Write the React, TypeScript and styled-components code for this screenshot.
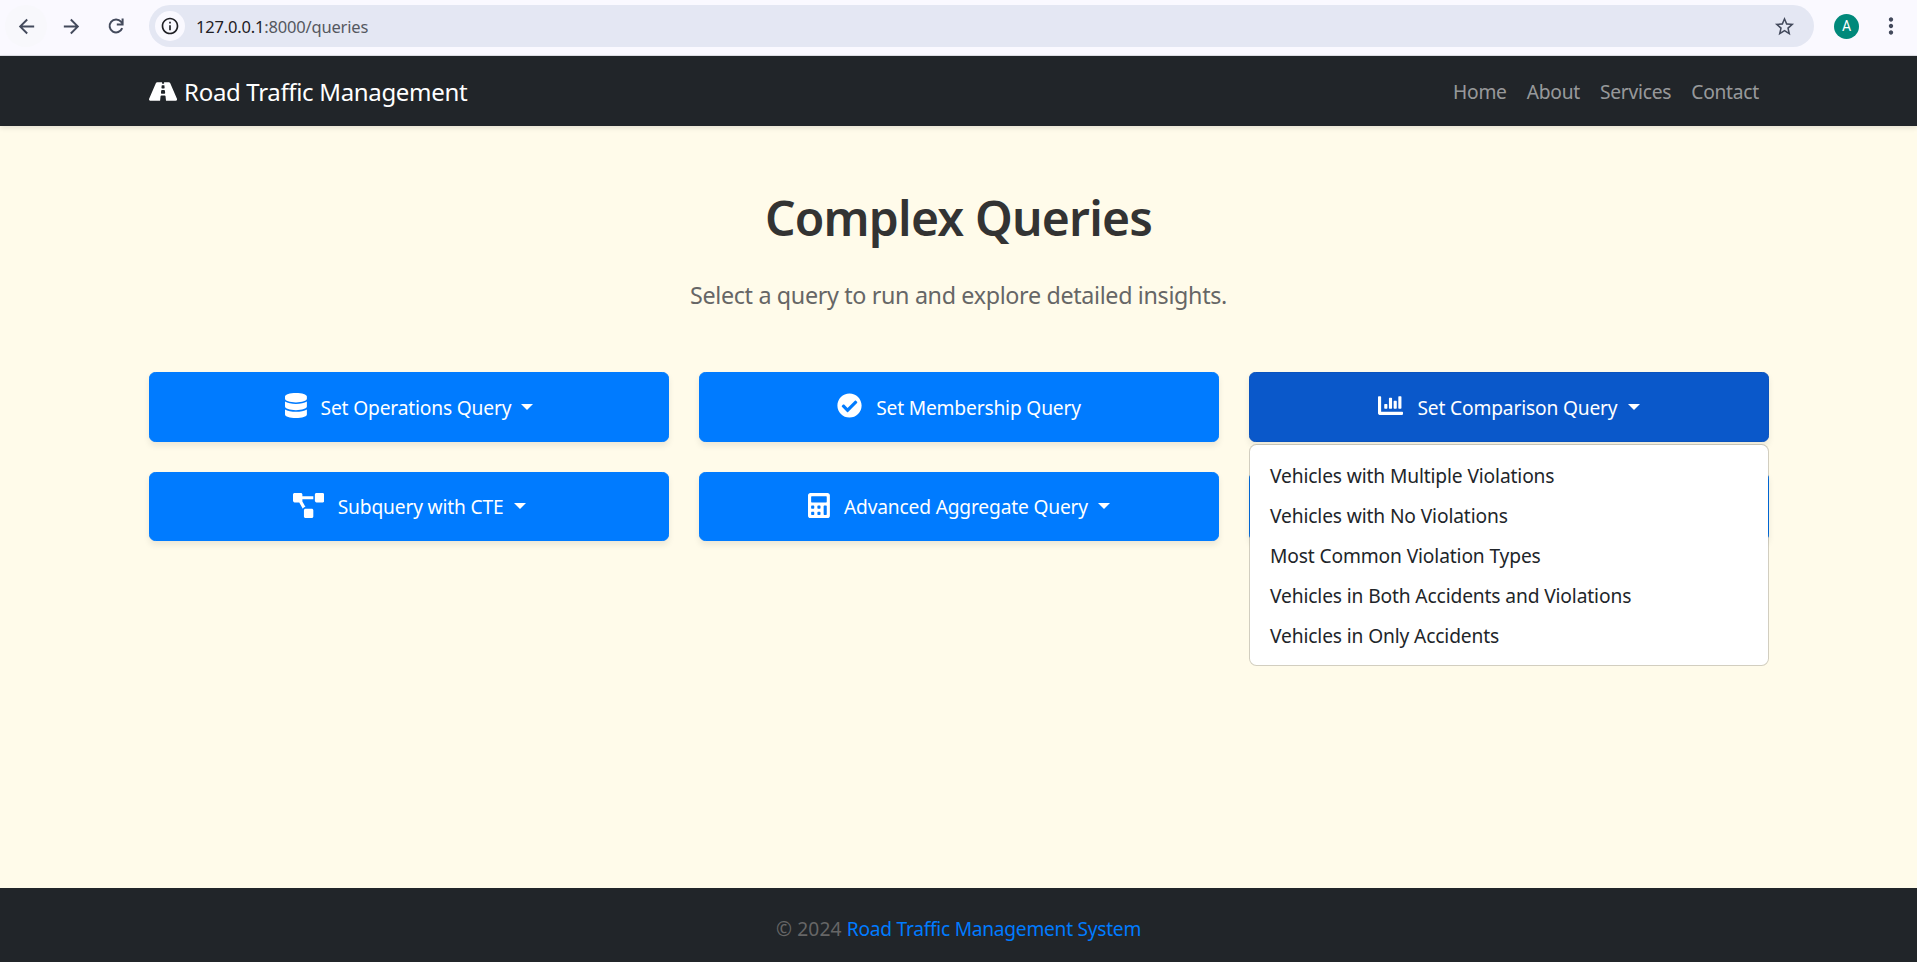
import React from "react";
import styled, { createGlobalStyle } from "styled-components";
import type { IconType } from "react-icons";
import {
  FaRoad,
  FaDatabase,
  FaCheckCircle,
  FaChartBar,
  FaProjectDiagram,
  FaCalculator,
} from "react-icons/fa";
import { MdArrowBack, MdArrowForward, MdInfoOutline, MdMoreVert, MdStarBorder } from "react-icons/md";

const GlobalStyle = createGlobalStyle`
  *, *::before, *::after { box-sizing: border-box; }
  html, body { margin: 0; padding: 0; }
  body {
    font-family: "Segoe UI", "Noto Sans", sans-serif;
    font-size: 19.2px;
    line-height: 30px;
    color: #212529;
    background: #fffbea;
    overflow: hidden;
  }
  svg { display: block; flex: none; }
`;

const Window = styled.div`
  display: flex;
  flex-direction: column;
  height: 962px;
`;

const Toolbar = styled.div`
  display: flex;
  align-items: center;
  flex: none;
  height: 56px;
  padding: 0 13px 3px 5px;
  background: #faf9ff;
  border-bottom: 1px solid #dfe0e6;
  color: #434a5c;
`;

const ToolButton = styled.button<{ $tinted?: boolean }>`
  display: flex;
  align-items: center;
  justify-content: center;
  width: 42px;
  height: 42px;
  margin-right: 3px;
  padding: 0;
  border: 0;
  border-radius: 50%;
  color: inherit;
  background: ${(p) => (p.$tinted ? "#f8f8fc" : "transparent")};
`;

const AddressBar = styled.div`
  display: flex;
  align-items: center;
  flex: 1;
  height: 42px;
  margin-left: 9px;
  padding: 0 18px 0 6px;
  border-radius: 21px;
  background: #e4e7f3;
`;

const SiteInfo = styled.span`
  display: flex;
  align-items: center;
  justify-content: center;
  width: 30px;
  height: 30px;
  border-radius: 50%;
  background: #faf9ff;
  color: #1f1f24;
`;

const Address = styled.span`
  flex: 1;
  padding: 1px 0 0 11px;
  font-size: 16.5px;
  letter-spacing: -0.18px;
  color: #55585f;

  b {
    font-weight: 400;
    color: #1f2024;
  }
`;

const Avatar = styled.span`
  display: flex;
  align-items: center;
  justify-content: center;
  width: 25px;
  height: 25px;
  margin: 0 19px 0 20px;
  border-radius: 50%;
  background: #00897b;
  color: #fff;
  font: 400 14px/25px Roboto, sans-serif;
`;

const Navbar = styled.header`
  flex: none;
  height: 70px;
  background: #212529;
  box-shadow: 0 2px 5px rgba(0, 0, 0, 0.1);
`;

const Container = styled.div`
  width: 1620px;
  margin: 0 148px 0 149px;
`;

const NavRow = styled(Container)`
  display: flex;
  align-items: center;
  justify-content: space-between;
  height: 70px;
`;

const Brand = styled.a`
  display: flex;
  align-items: center;
  gap: 7px;
  padding-top: 1px;
  font-size: 24px;
  letter-spacing: -0.33px;
  color: #fff;
`;

/* Font Awesome glyphs share one height; the width follows each view box. */
const Glyph = styled.span<{ $width: number }>`
  display: block;
  flex: none;

  svg {
    width: ${(p) => p.$width}px;
    height: 25px;
  }
`;

const NavLinks = styled.nav`
  display: flex;
  padding-top: 1px;
`;

const NavLink = styled.a`
  padding: 0 10px;
  letter-spacing: -0.24px;
  color: rgba(255, 255, 255, 0.55);
`;

const Main = styled.main`
  flex: 1;
  padding-top: 62px;
`;

const Title = styled.h1`
  margin: 0;
  font-size: 48px;
  font-weight: 600;
  line-height: 60px;
  letter-spacing: -0.79px;
  text-align: center;
  color: #333;
`;

const Subtitle = styled.p`
  margin: 28px 0 58.2px;
  font-size: 23.3px;
  line-height: 38px;
  letter-spacing: -0.34px;
  text-align: center;
  color: #666;
`;

const QueryGrid = styled(Container)`
  display: grid;
  grid-template-columns: repeat(3, 520px);
  gap: 30px;
`;

const QueryCell = styled.div`
  position: relative;
`;

const QueryButton = styled.button<{ $open?: boolean }>`
  display: flex;
  align-items: center;
  justify-content: center;
  width: 520px;
  height: 69.4px;
  padding: 0;
  border: 1px solid ${(p) => (p.$open ? "#0a53be" : "#007bff")};
  border-radius: 6.25px;
  background: ${(p) => (p.$open ? "#0a58ca" : "#007bff")};
  box-shadow: 0 4px 6px rgba(0, 0, 0, 0.08);
  font: inherit;
  letter-spacing: -0.17px;
  color: #fff;

  ${Glyph} {
    margin-bottom: 2px;
  }
`;

const ButtonLabel = styled.span`
  padding: 2px 0 0 14px;
`;

const Caret = styled.span`
  width: 0;
  height: 0;
  margin: 0 0 0 10px;
  border-top: 6px solid currentColor;
  border-left: 6px solid transparent;
  border-right: 6px solid transparent;
`;

const Menu = styled.ul`
  position: absolute;
  top: calc(100% + 2.5px);
  left: 0;
  z-index: 1;
  width: 100%;
  margin: 0;
  padding: 10px 0;
  list-style: none;
  border: 1px solid rgba(0, 0, 0, 0.175);
  border-radius: 7.5px;
  background: #fff;
  background-clip: padding-box;
`;

const MenuItem = styled.li`
  height: 40px;
  padding: 6px 20px 4px;
  letter-spacing: -0.13px;
`;

const Footer = styled.footer`
  flex: none;
  height: 74px;
  padding-top: 26px;
  background: #212529;
  text-align: center;
  letter-spacing: 0.15px;
  color: #666;
`;

const FooterLink = styled.a`
  letter-spacing: -0.28px;
  color: #007bff;
`;

const ReloadIcon = () => (
  <svg width="20" height="20" viewBox="0 0 20 20" fill="none" stroke="currentColor" strokeWidth="2">
    <path d="M16.2 12.2A6.5 6.5 0 1 1 15 5.6L16.4 7.4" />
    <path d="M16.6 2.6V8.4H10.8" />
  </svg>
);

interface Query {
  label?: string;
  icon?: IconType;
  iconWidth?: number;
  dropdown?: boolean;
  items?: string[];
}

const queries: Query[] = [
  { label: "Set Operations Query", icon: FaDatabase, iconWidth: 21.9, dropdown: true },
  { label: "Set Membership Query", icon: FaCheckCircle, iconWidth: 25 },
  {
    label: "Set Comparison Query",
    icon: FaChartBar,
    iconWidth: 25,
    dropdown: true,
    items: [
      "Vehicles with Multiple Violations",
      "Vehicles with No Violations",
      "Most Common Violation Types",
      "Vehicles in Both Accidents and Violations",
      "Vehicles in Only Accidents",
    ],
  },
  { label: "Subquery with CTE", icon: FaProjectDiagram, iconWidth: 31.25, dropdown: true },
  { label: "Advanced Aggregate Query", icon: FaCalculator, iconWidth: 21.9, dropdown: true },
  {},
];

export default function App() {
  return (
    <Window>
      <GlobalStyle />
      <Toolbar>
        <ToolButton $tinted aria-label="Back"><MdArrowBack size={23} /></ToolButton>
        <ToolButton aria-label="Forward"><MdArrowForward size={23} /></ToolButton>
        <ToolButton aria-label="Reload"><ReloadIcon /></ToolButton>
        <AddressBar>
          <SiteInfo><MdInfoOutline size={20} /></SiteInfo>
          <Address><b>127.0.0.1</b>:8000/queries</Address>
          <MdStarBorder size={23} />
        </AddressBar>
        <Avatar>A</Avatar>
        <MdMoreVert size={26} />
      </Toolbar>

      <Navbar>
        <NavRow>
          <Brand>
            <Glyph $width={28.1}><FaRoad /></Glyph>
            Road Traffic Management
          </Brand>
          <NavLinks>
            <NavLink>Home</NavLink>
            <NavLink>About</NavLink>
            <NavLink>Services</NavLink>
            <NavLink>Contact</NavLink>
          </NavLinks>
        </NavRow>
      </Navbar>

      <Main>
        <Title>Complex Queries</Title>
        <Subtitle>Select a query to run and explore detailed insights.</Subtitle>
        <QueryGrid>
          {queries.map(({ label, icon: Icon, iconWidth = 25, dropdown, items }, i) => (
            <QueryCell key={i}>
              <QueryButton $open={!!items}>
                {Icon && <Glyph $width={iconWidth}><Icon /></Glyph>}
                {label && <ButtonLabel>{label}</ButtonLabel>}
                {dropdown && <Caret />}
              </QueryButton>
              {items && (
                <Menu>
                  {items.map((item) => (
                    <MenuItem key={item}>{item}</MenuItem>
                  ))}
                </Menu>
              )}
            </QueryCell>
          ))}
        </QueryGrid>
      </Main>

      <Footer>
        © 2024 <FooterLink>Road Traffic Management System</FooterLink>
      </Footer>
    </Window>
  );
}
